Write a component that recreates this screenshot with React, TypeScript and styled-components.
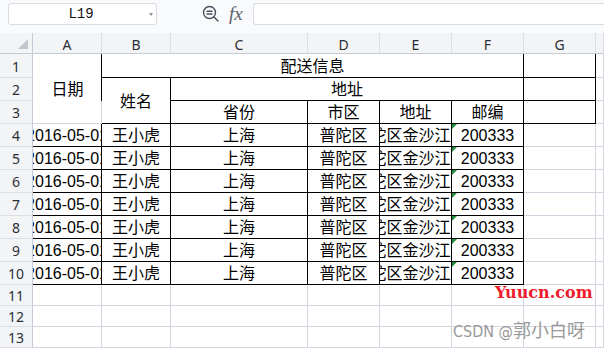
import React from 'react';
import styled, { createGlobalStyle, css } from 'styled-components';

const GRID = '#d0d5df';
const HEAD_LINE = '#c4cad6';
const HEAD_SEP = '#dadee6';
const BLACK = '#000';

const GlobalStyle = createGlobalStyle`
  html, body { margin: 0; padding: 0; background: #fff; }
  body {
    font-family: "Liberation Sans", "Noto Sans CJK SC", sans-serif;
    overflow: hidden;
  }
`;

const Page = styled.div`
  position: relative;
  width: 604px;
  height: 348px;
  overflow: hidden;
  background: #fff;
`;

const Toolbar = styled.div`
  height: 33px;
  box-sizing: border-box;
  padding: 3px 0 0 8px;
  display: flex;
  align-items: flex-start;
  background: #f9fafb;
`;

const NameBox = styled.div`
  width: 149px;
  height: 22px;
  box-sizing: border-box;
  border: 1px solid #d9dce2;
  border-radius: 3px;
  background: #fff;
  display: flex;
  align-items: center;
`;

const NameText = styled.span`
  flex: 1;
  text-align: center;
  font-family: "Liberation Mono", monospace;
  font-size: 14px;
  color: #111;
  padding-left: 4px;
`;

const Caret = styled.span`
  width: 0;
  height: 0;
  border-left: 2.5px solid transparent;
  border-right: 2.5px solid transparent;
  border-top: 3px solid #8d929b;
  margin-right: 3px;
`;

const IconGroup = styled.div`
  display: flex;
  align-items: center;
  gap: 9px;
  height: 22px;
  margin-left: 45px;
`;

const Fx = styled.span`
  font-family: "Liberation Serif", serif;
  font-style: italic;
  font-size: 19px;
  color: #5a606b;
  line-height: 1;
  margin-top: -2px;
`;

const FormulaBox = styled.div`
  flex: 1;
  height: 22px;
  box-sizing: border-box;
  margin-left: 10px;
  border: 1px solid #d9dce2;
  border-right: none;
  border-radius: 3px 0 0 3px;
  background: #fff;
`;

const Sheet = styled.div`
  display: grid;
  grid-template-columns: 33px 69px 69px 137px 72px 72px 72px 72px 1fr;
  grid-template-rows: 21px 24px repeat(9, 23px) repeat(3, 21px);
  height: 315px;
`;

const Corner = styled.div`
  background: #f3f4f6;
  box-sizing: border-box;
  border-right: 1px solid ${HEAD_LINE};
  border-bottom: 1px solid ${HEAD_LINE};
  display: flex;
  align-items: flex-end;
  justify-content: flex-end;
  padding: 0 4px 4px 0;
`;

const CornerMark = styled.span`
  width: 0;
  height: 0;
  border-left: 10px solid transparent;
  border-bottom: 10px solid #c2c6cd;
`;

const ColHead = styled.div`
  background: #f3f4f6;
  box-sizing: border-box;
  border-right: 1px solid ${HEAD_SEP};
  border-bottom: 1px solid ${HEAD_LINE};
  display: flex;
  align-items: center;
  justify-content: center;
  font-family: "Noto Sans", "Liberation Sans", sans-serif;
  font-size: 14px;
  color: #2b2f36;
  padding-top: 2px;
`;

const RowHead = styled.div<{ $row: number }>`
  grid-column: 1;
  grid-row: ${(p) => p.$row};
  background: #f3f4f6;
  box-sizing: border-box;
  border-right: 1px solid ${HEAD_LINE};
  border-bottom: 1px solid ${HEAD_SEP};
  display: flex;
  align-items: center;
  justify-content: center;
  font-family: "Noto Sans", "Liberation Sans", sans-serif;
  font-size: 14px;
  color: #2b2f36;
  padding-top: 1px;
`;

type CellProps = {
  $col: string;
  $row: string;
  $right: string;
  $bottom: string;
  $split?: boolean;
  $flag?: boolean;
};

const Cell = styled.div<CellProps>`
  grid-column: ${(p) => p.$col};
  grid-row: ${(p) => p.$row};
  position: relative;
  box-sizing: border-box;
  border-right: 1px solid ${(p) => p.$right};
  border-bottom: 1px solid ${(p) => p.$bottom};
  display: flex;
  align-items: center;
  justify-content: center;
  overflow: hidden;
  white-space: nowrap;
  padding-top: 2px;
  font-size: 16px;
  line-height: 1;
  color: #000;
  background: #fff;
  ${(p) =>
    p.$split &&
    css`
      border-right: none;
      background: linear-gradient(${BLACK}, ${BLACK}) right top / 1px 47px no-repeat,
        linear-gradient(${GRID}, ${GRID}) right bottom / 1px 100% no-repeat, #fff;
    `}
  ${(p) =>
    p.$flag &&
    css`
      &::before {
        content: '';
        position: absolute;
        left: 0;
        top: 0;
        border-top: 5px solid #1f8f3c;
        border-right: 5px solid transparent;
      }
    `}
`;

const Shifted = styled.span<{ $dx: number }>`
  flex: none;
  transform: translateX(${(p) => p.$dx}px);
`;

const YuucnMark = styled.div`
  position: absolute;
  left: 495px;
  top: 283px;
  font-family: "DejaVu Serif", "Liberation Serif", serif;
  font-weight: bold;
  font-size: 16px;
  color: #ee1c2a;
  line-height: 20px;
  pointer-events: none;
`;

const CsdnMark = styled.div`
  position: absolute;
  left: 453px;
  top: 318px;
  color: #9a9a9a;
  line-height: 22px;
  white-space: nowrap;
  pointer-events: none;
`;

const CsdnLatin = styled.span`
  font-family: "Liberation Sans Narrow", "DejaVu Sans Condensed", "Liberation Sans", sans-serif;
  font-stretch: condensed;
  font-size: 16px;
`;

const CsdnCjk = styled.span`
  font-family: "Noto Sans CJK SC", sans-serif;
  font-size: 18px;
`;

type Def = {
  r: number;
  c: number;
  rs?: number;
  cs?: number;
  text?: string;
  boxed?: boolean;
  variant?: 'split' | 'date' | 'addr' | 'zip';
};

const ROWS = 13;
const COLS = 8;
const LETTERS = ['A', 'B', 'C', 'D', 'E', 'F', 'G', ''];

function buildSheet() {
  const defs: Def[] = [
    { r: 1, c: 1, rs: 3, text: '日期', variant: 'split' },
    { r: 1, c: 2, cs: 5, text: '配送信息', boxed: true },
    { r: 1, c: 7, boxed: true },
    { r: 2, c: 7, boxed: true },
    { r: 3, c: 7, boxed: true },
    { r: 2, c: 2, rs: 2, text: '姓名', boxed: true },
    { r: 2, c: 3, cs: 4, text: '地址', boxed: true },
    { r: 3, c: 3, text: '省份', boxed: true },
    { r: 3, c: 4, text: '市区', boxed: true },
    { r: 3, c: 5, text: '地址', boxed: true },
    { r: 3, c: 6, text: '邮编', boxed: true },
  ];
  for (let r = 4; r <= 10; r++) {
    defs.push(
      { r, c: 1, text: '2016-05-01', boxed: true, variant: 'date' },
      { r, c: 2, text: '王小虎', boxed: true },
      { r, c: 3, text: '上海', boxed: true },
      { r, c: 4, text: '普陀区', boxed: true },
      { r, c: 5, text: '普陀区金沙江路', boxed: true, variant: 'addr' },
      { r, c: 6, text: '200333', boxed: true, variant: 'zip' },
    );
  }
  const owner: (Def | null)[][] = Array.from({ length: ROWS + 2 }, () => Array(COLS + 2).fill(null));
  defs.forEach((d) => {
    for (let i = 0; i < (d.rs ?? 1); i++)
      for (let j = 0; j < (d.cs ?? 1); j++) owner[d.r + i][d.c + j] = d;
  });
  for (let r = 1; r <= ROWS; r++)
    for (let c = 1; c <= COLS; c++)
      if (!owner[r][c]) {
        const d: Def = { r, c };
        owner[r][c] = d;
        defs.push(d);
      }
  return { defs, owner };
}

const { defs: DEFS, owner: OWNER } = buildSheet();

const boxedAt = (r: number, c: number) => !!(OWNER[r] && OWNER[r][c] && OWNER[r][c]!.boxed);

function SheetCell({ d }: { d: Def }) {
  const rs = d.rs ?? 1;
  const cs = d.cs ?? 1;
  const right = d.boxed || boxedAt(d.r, d.c + cs) ? BLACK : GRID;
  const bottom = d.variant === 'split' ? GRID : d.boxed || boxedAt(d.r + rs, d.c) ? BLACK : GRID;
  let content: React.ReactNode = d.text;
  if (d.variant === 'addr') content = <Shifted $dx={-5}>{d.text}</Shifted>;
  if (d.variant === 'date') content = <Shifted $dx={0}>{d.text}</Shifted>;
  return (
    <Cell
      $col={`${d.c + 1} / span ${cs}`}
      $row={`${d.r + 1} / span ${rs}`}
      $right={right}
      $bottom={bottom}
      $split={d.variant === 'split'}
      $flag={d.variant === 'zip'}
    >
      {content}
    </Cell>
  );
}

function ZoomIcon() {
  return (
    <svg width="18" height="18" viewBox="0 0 18 18" fill="none" stroke="#4a505c" strokeWidth="1.4" strokeLinecap="round">
      <circle cx="7.5" cy="7.5" r="6" />
      <line x1="5" y1="6.3" x2="10" y2="6.3" />
      <line x1="5" y1="9" x2="10" y2="9" />
      <line x1="12" y1="12" x2="16" y2="16" />
    </svg>
  );
}

export default function App() {
  return (
    <Page>
      <GlobalStyle />
      <Toolbar>
        <NameBox>
          <NameText>L19</NameText>
          <Caret />
        </NameBox>
        <IconGroup>
          <ZoomIcon />
          <Fx>fx</Fx>
        </IconGroup>
        <FormulaBox />
      </Toolbar>
      <Sheet>
        <Corner>
          <CornerMark />
        </Corner>
        {LETTERS.map((l, i) => (
          <ColHead key={i}>{l}</ColHead>
        ))}
        {Array.from({ length: ROWS }, (_, i) => (
          <RowHead key={`r${i}`} $row={i + 2}>
            {i + 1}
          </RowHead>
        ))}
        {DEFS.map((d) => (
          <SheetCell key={`${d.r}-${d.c}`} d={d} />
        ))}
      </Sheet>
      <YuucnMark>Yuucn.com</YuucnMark>
      <CsdnMark>
        <CsdnLatin>CSDN @</CsdnLatin>
        <CsdnCjk>郭小白呀</CsdnCjk>
      </CsdnMark>
    </Page>
  );
}
